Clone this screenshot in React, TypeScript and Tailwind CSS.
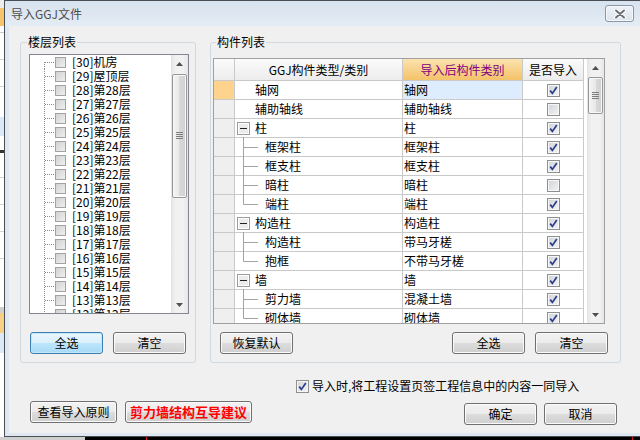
import React from "react";
import clsx from "clsx";

type TreeKind = "leaf" | "parent" | "child" | "last";

interface PartRow {
  name: string;
  kind: TreeKind;
  target: string;
  on: boolean;
}

const floors = [
  "[30]机房",
  "[29]屋顶层",
  ...Array.from({ length: 17 }, (_, i) => `[${28 - i}]第${28 - i}层`),
];

const parts: PartRow[] = [
  { name: "轴网", kind: "leaf", target: "轴网", on: true },
  { name: "辅助轴线", kind: "leaf", target: "辅助轴线", on: false },
  { name: "柱", kind: "parent", target: "柱", on: true },
  { name: "框架柱", kind: "child", target: "框架柱", on: true },
  { name: "框支柱", kind: "child", target: "框支柱", on: true },
  { name: "暗柱", kind: "child", target: "暗柱", on: false },
  { name: "端柱", kind: "last", target: "端柱", on: true },
  { name: "构造柱", kind: "parent", target: "构造柱", on: true },
  { name: "构造柱", kind: "child", target: "带马牙槎", on: true },
  { name: "抱框", kind: "last", target: "不带马牙槎", on: true },
  { name: "墙", kind: "parent", target: "墙", on: true },
  { name: "剪力墙", kind: "child", target: "混凝土墙", on: true },
  { name: "砌体墙", kind: "last", target: "砌体墙", on: true },
];

function CheckBox({ checked }: { checked?: boolean }) {
  return (
    <span className="flex h-[13px] w-[13px] shrink-0 items-center justify-center border border-[#8e8f8f] bg-[linear-gradient(135deg,#cfd3d8,#f4f4f4)] shadow-[inset_0_0_0_1px_#f7f7f7]">
      {checked && (
        <svg width="9" height="9" viewBox="0 0 9 9">
          <path d="M1.2 4.6 L3.4 7.4 L7.8 1" fill="none" stroke="#2a3e8c" strokeWidth="1.7" />
        </svg>
      )}
    </span>
  );
}

function Btn({
  children,
  focus,
  className,
}: {
  children: React.ReactNode;
  focus?: boolean;
  className?: string;
}) {
  return (
    <button
      className={clsx(
        "flex h-[22px] shrink-0 items-center justify-center rounded-[3px] border leading-[16px]",
        focus
          ? "border-[#3c7fb1] bg-[linear-gradient(to_bottom,#eaf6fd,#d9f0fc_50%,#bee6fd_50%,#a7d9f5)] shadow-[inset_0_0_0_1px_#c4e6f9]"
          : "border-[#707070] bg-[linear-gradient(to_bottom,#f2f2f2,#ebebeb_50%,#dddddd_50%,#cfcfcf)] shadow-[inset_0_0_0_1px_#fbfbfb]",
        className
      )}
    >
      {children}
    </button>
  );
}

function Arrow({ up }: { up?: boolean }) {
  return (
    <div className="flex h-[17px] items-center justify-center">
      <svg width="7" height="4" viewBox="0 0 7 4">
        <path d={up ? "M0 4 L3.5 0 L7 4 Z" : "M0 0 L3.5 4 L7 0 Z"} fill="#505050" />
      </svg>
    </div>
  );
}

function VScroll({ thumbClass }: { thumbClass: string }) {
  return (
    <div className="flex h-full w-[17px] shrink-0 flex-col bg-[linear-gradient(to_right,#e3e3e3,#f1f1f1_25%,#f1f1f1_75%,#e6e6e6)]">
      <Arrow up />
      <div className="flex-1">
        <div
          className={clsx(
            "mx-auto flex w-[15px] items-center justify-center rounded-[2px] border border-[#979797] bg-[linear-gradient(to_right,#f4f4f4,#e8e8e8_50%,#d9d9d9_50%,#d0d0d0)] shadow-[inset_0_0_0_1px_#f8f8f8]",
            thumbClass
          )}
        >
          <svg width="7" height="8" viewBox="0 0 7 8">
            {[0, 2, 4, 6].map((y) => (
              <line key={y} x1="0" y1={y + 0.5} x2="7" y2={y + 0.5} stroke="#7d7d7d" />
            ))}
          </svg>
        </div>
      </div>
      <Arrow />
    </div>
  );
}

function FloorRow({ label, first }: { label: string; first: boolean }) {
  return (
    <div className="flex h-[14px] shrink-0 items-center">
      <svg width="25" height="14" className="shrink-0">
        <line
          x1="14.5"
          y1={first ? 7 : 0}
          x2="14.5"
          y2="14"
          stroke="#8c8c8c"
          strokeDasharray="1 1"
        />
        <line x1="15" y1="7.5" x2="24" y2="7.5" stroke="#8c8c8c" strokeDasharray="1 1" />
      </svg>
      <span className="h-[11px] w-[11px] shrink-0 border border-[#a2a2a2] bg-[linear-gradient(135deg,#d2d2d2,#efefef)]" />
      <span className="ml-[6px] whitespace-nowrap leading-[14px]">{label}</span>
    </div>
  );
}

function TreeGlyph({ kind }: { kind: TreeKind }) {
  if (kind === "leaf") return <span className="w-[20px] shrink-0" />;
  if (kind === "parent")
    return (
      <svg width="20" height="18" className="shrink-0">
        <rect x="2.5" y="3.5" width="12" height="12" fill="#ececec" stroke="#9d9d9d" />
        <rect x="3.5" y="4.5" width="10" height="10" fill="none" stroke="#ffffff" />
        <line x1="5" y1="9.5" x2="12" y2="9.5" stroke="#222" />
      </svg>
    );
  return (
    <svg width="30" height="18" className="shrink-0 overflow-visible">
      <line x1="8.5" y1="-1" x2="8.5" y2={kind === "last" ? 9.5 : 18} stroke="#a3a3a3" />
      <line x1="8.5" y1="9.5" x2="23" y2="9.5" stroke="#a3a3a3" />
    </svg>
  );
}

function PartsTable() {
  const cell = "border-b border-r border-[#c9c9c9]";
  return (
    <div className="flex h-[266px] w-[392px] overflow-hidden border border-[#a0a0a0] bg-white">
      <div className="h-full w-[370px] shrink-0 overflow-hidden">
        <div className="grid grid-cols-[21px_168px_120px_61px]">
          <div className={clsx(cell, "h-[22px] bg-[linear-gradient(to_bottom,#fbfbfb,#ececec)]")} />
          <div
            className={clsx(
              cell,
              "flex h-[22px] items-center justify-center bg-[linear-gradient(to_bottom,#fbfbfb,#ececec)]"
            )}
          >
            GGJ构件类型/类别
          </div>
          <div
            className={clsx(
              cell,
              "flex h-[22px] items-center justify-center bg-[linear-gradient(to_bottom,#fbe3ae,#f4c26a)] text-[#800080]"
            )}
          >
            导入后构件类别
          </div>
          <div
            className={clsx(
              cell,
              "flex h-[22px] items-center justify-center bg-[linear-gradient(to_bottom,#fbfbfb,#ececec)]"
            )}
          >
            是否导入
          </div>

          {parts.map((r, i) => (
            <React.Fragment key={i}>
              <div className={clsx(cell, "h-[19px]", i === 0 ? "bg-[#fdd38d]" : "bg-[#efefef]")} />
              <div className={clsx(cell, "flex h-[19px] items-start leading-[18px]")}>
                <TreeGlyph kind={r.kind} />
                <span className={r.kind === "parent" ? "ml-[0px]" : ""}>{r.name}</span>
              </div>
              <div className={clsx(cell, "h-[19px] pl-[1px] leading-[18px]", i === 0 && "bg-[#deedfd]")}>
                {r.target}
              </div>
              <div className={clsx(cell, "flex h-[19px] items-center justify-center")}>
                <CheckBox checked={r.on} />
              </div>
            </React.Fragment>
          ))}
        </div>
      </div>
      <div className="w-[3px] shrink-0" />
      <VScroll thumbClass="mt-[1px] h-[37px]" />
    </div>
  );
}

function TitleBar() {
  return (
    <div className="flex h-[25px] shrink-0 items-center justify-between bg-[linear-gradient(to_bottom,#d7e3ef,#dfe8f2_60%,#e4ecf5)] pl-[6px] pr-[6px]">
      <span className="text-[#4d4d4d]">导入GGJ文件</span>
      <div className="flex h-[17px] w-[29px] items-center justify-center rounded-[3px] border border-[#8996a8] bg-[linear-gradient(to_bottom,#eef2f7,#dde4ed)] shadow-[inset_0_0_0_1px_#f6f8fb]">
        <svg width="12" height="10" viewBox="0 0 12 10">
          <path d="M2 1.5 L10 8.5 M10 1.5 L2 8.5" stroke="#ffffff" strokeWidth="4" strokeLinecap="round" />
          <path d="M2 1.5 L10 8.5 M10 1.5 L2 8.5" stroke="#6b6f75" strokeWidth="2" strokeLinecap="round" />
        </svg>
      </div>
    </div>
  );
}

function BackStrip() {
  return (
    <div className="flex w-[4px] shrink-0 flex-col bg-white">
      <div className="h-[8px] bg-[#ececec]" />
      <div className="h-[18px] bg-[#f5c46b]" />
      <div className="mt-[6px] h-px bg-[#c8c8c8]" />
      <div className="mt-[26px] h-px bg-[#d4d4d4]" />
      <div className="mt-[26px] h-px bg-[#d4d4d4]" />
      <div className="mt-[30px] h-[19px] bg-[#dae8f8]" />
      <div className="mt-[14px] h-[3px] bg-[#333]" />
      <div className="mt-[24px] h-px bg-[#d4d4d4]" />
      <div className="mt-[26px] h-px bg-[#d4d4d4]" />
      <div className="mt-[26px] h-px bg-[#d4d4d4]" />
      <div className="mt-[26px] h-px bg-[#d4d4d4]" />
      <div className="mt-[48px] h-[6px] bg-[#cfcfcf]" />
      <div className="h-[20px] bg-[#f8cf85]" />
      <div className="h-[20px] bg-[#dce9f7]" />
    </div>
  );
}

export default function App() {
  return (
    <div className="flex h-[440px] w-[640px] flex-col overflow-hidden bg-black font-['Noto_Sans_CJK_SC',sans-serif] text-[12px] leading-[16px] text-black">
      <div className="flex h-[437px] shrink-0">
        <BackStrip />
        <div className="flex flex-1 flex-col border-y border-l border-[#4a4f55] bg-[#dfe8f1]">
          <TitleBar />
          <div className="flex-1 pb-[3px] pl-[4px]">
            <div className="flex h-full flex-col bg-[#f0f0f0] pl-[11px]">
              {/* group boxes */}
              <div className="mt-[9px] flex h-[328px] shrink-0">
                <fieldset className="h-[328px] w-[176px] shrink-0 rounded-[3px] border border-[#d0d9df]">
                  <legend className="ml-[6px] px-[1px] leading-[14px]">楼层列表</legend>
                  <div className="pl-[8px] pt-[5px]">
                    <div className="flex h-[260px] w-[160px] border border-[#828790] bg-white">
                      <div className="flex flex-1 flex-col overflow-hidden">
                        {floors.map((f, i) => (
                          <FloorRow key={f} label={f} first={i === 0} />
                        ))}
                      </div>
                      <VScroll thumbClass="mt-[2px] h-[124px]" />
                    </div>
                    <div className="mt-[18px] flex">
                      <Btn focus className="ml-[1px] w-[73px]">
                        全选
                      </Btn>
                      <Btn className="ml-[10px] w-[73px]">清空</Btn>
                    </div>
                  </div>
                </fieldset>

                <fieldset className="ml-[14px] h-[328px] w-[411px] shrink-0 rounded-[3px] border border-[#d0d9df]">
                  <legend className="ml-[5px] px-[1px] leading-[14px]">构件列表</legend>
                  <div className="pl-[2px] pt-[9px]">
                    <PartsTable />
                    <div className="mt-[8px] flex">
                      <Btn className="ml-[7px] w-[73px]">恢复默认</Btn>
                      <Btn className="ml-[159px] w-[73px]">全选</Btn>
                      <Btn className="ml-[10px] w-[73px]">清空</Btn>
                    </div>
                  </div>
                </fieldset>
              </div>

              {/* import option */}
              <div className="mt-[15px] flex h-[16px] shrink-0 items-center pl-[276px]">
                <CheckBox checked />
                <span className="ml-[3px] whitespace-nowrap">导入时,将工程设置页签工程信息中的内容一同导入</span>
              </div>

              {/* footer buttons */}
              <div className="mt-[7px] flex shrink-0 items-start">
                <Btn className="ml-[10px] w-[87px]">查看导入原则</Btn>
                <Btn className="ml-[8px] w-[127px] text-[13px] font-bold text-[#ff0000]">剪力墙结构互导建议</Btn>
                <Btn className="ml-[212px] mt-[2px] w-[73px]">确定</Btn>
                <Btn className="ml-[7px] mt-[2px] w-[73px]">取消</Btn>
              </div>
            </div>
          </div>
        </div>
      </div>
      <div className="flex h-[3px] shrink-0">
        <div className="w-[85px] bg-[#cfcfcf]" />
        <div className="ml-[61px] w-px bg-[#e01010]" />
        <div className="ml-[485px] w-px bg-[#e01010]" />
      </div>
    </div>
  );
}
